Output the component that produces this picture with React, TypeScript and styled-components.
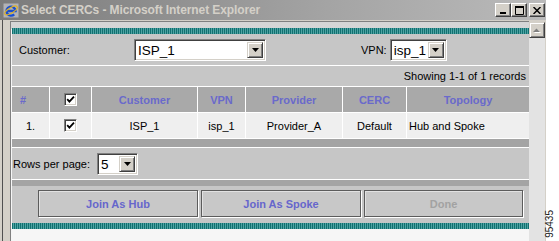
import React from 'react';
import styled, { createGlobalStyle } from 'styled-components';

const GlobalStyle = createGlobalStyle`
  html, body {
    margin: 0;
    padding: 0;
    background: #fff;
  }
  body {
    font-family: "Liberation Sans", Arial, sans-serif;
    overflow: hidden;
  }
`;

const Page = styled.div`
  display: flex;
  width: 559px;
  height: 241px;
`;

const Window = styled.div`
  display: flex;
  flex-direction: column;
  width: 546px;
  height: 241px;
  background: #d4d0c8;
  overflow: hidden;
`;

const TitleBar = styled.div`
  display: flex;
  align-items: center;
  height: 20px;
  padding: 0 1px 0 3px;
  background: linear-gradient(90deg, #7b7b7b 0%, #a4a4a4 60%, #bababa 100%);
`;

const Title = styled.span`
  flex: 1;
  margin-left: 2px;
  font-size: 12px;
  font-weight: bold;
  letter-spacing: -0.1px;
  color: #d4d0c8;
  white-space: nowrap;
`;

const CaptionButtons = styled.div`
  display: flex;
`;

const CaptionButton = styled.div<{ $gap?: boolean }>`
  width: 16px;
  height: 14px;
  box-sizing: border-box;
  margin-left: ${(p) => (p.$gap ? '2px' : '0')};
  background: #d4d0c8;
  border-top: 1px solid #fff;
  border-left: 1px solid #fff;
  border-right: 1px solid #404040;
  border-bottom: 1px solid #404040;
  box-shadow: inset -1px -1px 0 #808080;
  display: flex;
  align-items: center;
  justify-content: center;
`;

const Client = styled.div`
  flex: 1;
  display: flex;
  padding: 1px 1px 0 10px;
  background: linear-gradient(90deg, #d4d0c8 0 2px, #505050 2px 3px, #d4d0c8 3px);
`;

const Viewport = styled.div`
  width: 518px;
  display: flex;
  flex-direction: column;
  border-top: 1px solid #808080;
  border-left: 1px solid #808080;
  background: linear-gradient(180deg, #d6d6d6 0 7px, #f6f6f6 7px);
`;

const Panel = styled.div`
  margin: 6px 0 0 1px;
  display: flex;
  flex-direction: column;
  background: #fff;
`;

const Stripe = styled.div`
  height: 6px;
  background: repeating-linear-gradient(90deg, #127070 0 1px, #4fa3a3 1px 2px);
`;

const Row = styled.div<{ $h: number; $line?: boolean }>`
  display: flex;
  align-items: center;
  height: ${(p) => p.$h}px;
  margin-top: ${(p) => (p.$line ? '1px' : '0')};
  background: #c6c6c6;
  font-size: 11px;
  color: #000;
`;

const FieldLabel = styled.span<{ $w?: number; $pl?: number; $ml?: number }>`
  box-sizing: border-box;
  flex-shrink: 0;
  width: ${(p) => (p.$w ? `${p.$w}px` : 'auto')};
  padding-left: ${(p) => p.$pl || 0}px;
  margin-left: ${(p) => p.$ml || 0}px;
  margin-right: ${(p) => (p.$w ? 0 : 3)}px;
`;

const SelectBox = styled.div<{ $w: number }>`
  width: ${(p) => p.$w}px;
  height: 22px;
  box-sizing: border-box;
  display: flex;
  background: #fff;
  border-top: 1px solid #808080;
  border-left: 1px solid #808080;
  border-right: 1px solid #fff;
  border-bottom: 1px solid #fff;
  box-shadow: inset 1px 1px 0 #404040, inset -1px -1px 0 #d4d0c8;
  padding: 2px;
`;

const SelectValue = styled.span`
  flex: 1;
  padding-left: 1px;
  font-size: 13.5px;
  line-height: 18px;
  color: #000;
  white-space: nowrap;
  overflow: hidden;
`;

const DropButton = styled.div`
  width: 16px;
  height: 16px;
  flex-shrink: 0;
  box-sizing: border-box;
  background: #d4d0c8;
  border-top: 1px solid #d4d0c8;
  border-left: 1px solid #d4d0c8;
  border-right: 1px solid #404040;
  border-bottom: 1px solid #404040;
  box-shadow: inset 1px 1px 0 #fff, inset -1px -1px 0 #808080;
  display: flex;
  align-items: center;
  justify-content: center;
`;

const InfoText = styled.span`
  margin-left: auto;
  padding-right: 3px;
`;

const Table = styled.div`
  display: grid;
  grid-template-columns: 37px 41px 105px 47px 96px 63px 1fr;
  grid-auto-rows: 25px;
  gap: 1px;
  margin-top: 1px;
  background: #fff;
`;

const HeadCell = styled.div<{ $left?: boolean }>`
  display: flex;
  align-items: center;
  justify-content: ${(p) => (p.$left ? 'flex-start' : 'center')};
  padding-left: ${(p) => (p.$left ? '8px' : '0')};
  background: #a9a9a9;
  font-size: 11px;
  font-weight: bold;
  color: #6a6acb;
`;

const Cell = styled.div<{ $left?: boolean }>`
  display: flex;
  align-items: center;
  justify-content: ${(p) => (p.$left ? 'flex-start' : 'center')};
  padding-left: ${(p) => (p.$left ? '2px' : '0')};
  background: #efefef;
  font-size: 11px;
  color: #000;
`;

const CheckBox = styled.span`
  width: 13px;
  height: 13px;
  box-sizing: border-box;
  display: flex;
  align-items: center;
  justify-content: center;
  background: #fff;
  border-top: 1px solid #808080;
  border-left: 1px solid #808080;
  border-right: 1px solid #fff;
  border-bottom: 1px solid #fff;
  box-shadow: inset 1px 1px 0 #404040, inset -1px -1px 0 #d4d0c8;
`;

const Band = styled.div<{ $h: number }>`
  height: ${(p) => p.$h}px;
  margin-top: 1px;
  background: #a4a4a4;
`;

const ButtonRow = styled.div`
  display: flex;
  gap: 3px;
  height: 37px;
  box-sizing: border-box;
  padding: 4px 0 0 26px;
  background: #c6c6c6;
`;

const ActionButton = styled.div<{ $disabled?: boolean; $w: number }>`
  width: ${(p) => p.$w}px;
  height: 27px;
  box-sizing: border-box;
  display: flex;
  align-items: center;
  justify-content: center;
  background: #c8c8c8;
  border: 1px solid #5c5c5c;
  box-shadow: 1px 1px 0 #fff, inset 1px 1px 0 #e2e2e2;
  font-size: 11px;
  font-weight: bold;
  color: ${(p) => (p.$disabled ? '#a2a2a2' : '#6666cc')};
`;

const Scrollbar = styled.div`
  width: 16px;
  display: flex;
  flex-direction: column;
  background: #e3e3e3;
  border-top: 1px solid #d4d0c8;
`;

const ScrollButton = styled.div`
  width: 16px;
  height: 16px;
  box-sizing: border-box;
  background: #d4d0c8;
  border-top: 1px solid #d4d0c8;
  border-left: 1px solid #d4d0c8;
  border-right: 1px solid #404040;
  border-bottom: 1px solid #404040;
  box-shadow: inset 1px 1px 0 #fff, inset -1px -1px 0 #808080;
  display: flex;
  align-items: center;
  justify-content: center;
`;

const FigureColumn = styled.div`
  flex: 1;
  display: flex;
  align-items: flex-end;
  padding: 0 0 3px 0;
`;

const FigureNumber = styled.span`
  writing-mode: vertical-rl;
  transform: rotate(180deg);
  font-size: 10px;
  line-height: 8px;
  color: #1a1a1a;
`;

const IeIcon = () => (
  <svg width="16" height="16" viewBox="0 0 16 16">
    <rect x="0.5" y="1.5" width="15" height="14" fill="#e8e8f0" opacity="0.5" />
    <path d="M3.5 9 H12.5 A4.5 4.5 0 1 0 11.2 12.3" fill="none" stroke="#1a4fd0" strokeWidth="2.4" />
    <ellipse cx="8" cy="8.5" rx="7.2" ry="2.6" transform="rotate(-32 8 8.5)" fill="none" stroke="#e0b020" strokeWidth="1.1" />
  </svg>
);

const DownArrow = () => (
  <svg width="7" height="4" viewBox="0 0 7 4">
    <path d="M0 0 H7 L3.5 4 Z" fill="#000" />
  </svg>
);

const Check = () => (
  <svg width="9" height="9" viewBox="0 0 9 9">
    <path d="M1.2 4.2 L3.4 6.6 L8 1.6" fill="none" stroke="#000" strokeWidth="1.8" />
  </svg>
);

const Select = ({ value, w }: { value: string; w: number }) => (
  <SelectBox $w={w}>
    <SelectValue>{value}</SelectValue>
    <DropButton>
      <DownArrow />
    </DropButton>
  </SelectBox>
);

const App = () => {
  const columns = ['#', '', 'Customer', 'VPN', 'Provider', 'CERC', 'Topology'];
  const rows = [
    { n: '1.', customer: 'ISP_1', vpn: 'isp_1', provider: 'Provider_A', cerc: 'Default', topology: 'Hub and Spoke' },
  ];

  return (
    <>
      <GlobalStyle />
      <Page>
        <Window>
          <TitleBar>
            <IeIcon />
            <Title>Select CERCs - Microsoft Internet Explorer</Title>
            <CaptionButtons>
              <CaptionButton>
                <svg width="8" height="8" viewBox="0 0 8 8">
                  <rect x="1" y="6" width="6" height="2" fill="#000" />
                </svg>
              </CaptionButton>
              <CaptionButton>
                <svg width="9" height="9" viewBox="0 0 9 9">
                  <path d="M0.5 1.5 H8.5 V8.5 H0.5 Z" fill="none" stroke="#000" />
                  <rect x="0" y="0" width="9" height="2" fill="#000" />
                </svg>
              </CaptionButton>
              <CaptionButton $gap>
                <svg width="8" height="7" viewBox="0 0 8 7">
                  <path d="M0.5 0 L7.5 7 M7.5 0 L0.5 7" stroke="#000" strokeWidth="1.5" />
                </svg>
              </CaptionButton>
            </CaptionButtons>
          </TitleBar>
          <Client>
            <Viewport>
              <Panel>
                <Stripe />
                <Row $h={31}>
                  <FieldLabel $w={122} $pl={7}>Customer:</FieldLabel>
                  <Select value="ISP_1" w={132} />
                  <FieldLabel $ml={95}>VPN:</FieldLabel>
                  <Select value="isp_1" w={57} />
                </Row>
                <Row $h={20} $line>
                  <InfoText>Showing 1-1 of 1 records</InfoText>
                </Row>
                <Table>
                  {columns.map((c, i) =>
                    i === 1 ? (
                      <HeadCell key={i}>
                        <CheckBox>
                          <Check />
                        </CheckBox>
                      </HeadCell>
                    ) : (
                      <HeadCell key={i} $left={i === 0}>
                        {c}
                      </HeadCell>
                    )
                  )}
                  {rows.map((r) => (
                    <React.Fragment key={r.n}>
                      <Cell>{r.n}</Cell>
                      <Cell>
                        <CheckBox>
                          <Check />
                        </CheckBox>
                      </Cell>
                      <Cell>{r.customer}</Cell>
                      <Cell>{r.vpn}</Cell>
                      <Cell>{r.provider}</Cell>
                      <Cell>{r.cerc}</Cell>
                      <Cell $left>{r.topology}</Cell>
                    </React.Fragment>
                  ))}
                </Table>
                <Band $h={8} />
                <Row $h={31} $line>
                  <FieldLabel $w={85} $pl={1}>Rows per page:</FieldLabel>
                  <Select value="5" w={41} />
                </Row>
                <Band $h={6} />
                <ButtonRow>
                  <ActionButton $w={160}>Join As Hub</ActionButton>
                  <ActionButton $w={160}>Join As Spoke</ActionButton>
                  <ActionButton $w={159} $disabled>
                    Done
                  </ActionButton>
                </ButtonRow>
                <Stripe />
              </Panel>
            </Viewport>
            <Scrollbar>
              <ScrollButton>
                <svg width="8" height="5" viewBox="0 0 8 5">
                  <path d="M1 5 H8 L4.5 1.5 Z" fill="#fff" />
                  <path d="M0 4 H7 L3.5 0.5 Z" fill="#808080" />
                </svg>
              </ScrollButton>
            </Scrollbar>
          </Client>
        </Window>
        <FigureColumn>
          <FigureNumber>95435</FigureNumber>
        </FigureColumn>
      </Page>
    </>
  );
};

export default App;
